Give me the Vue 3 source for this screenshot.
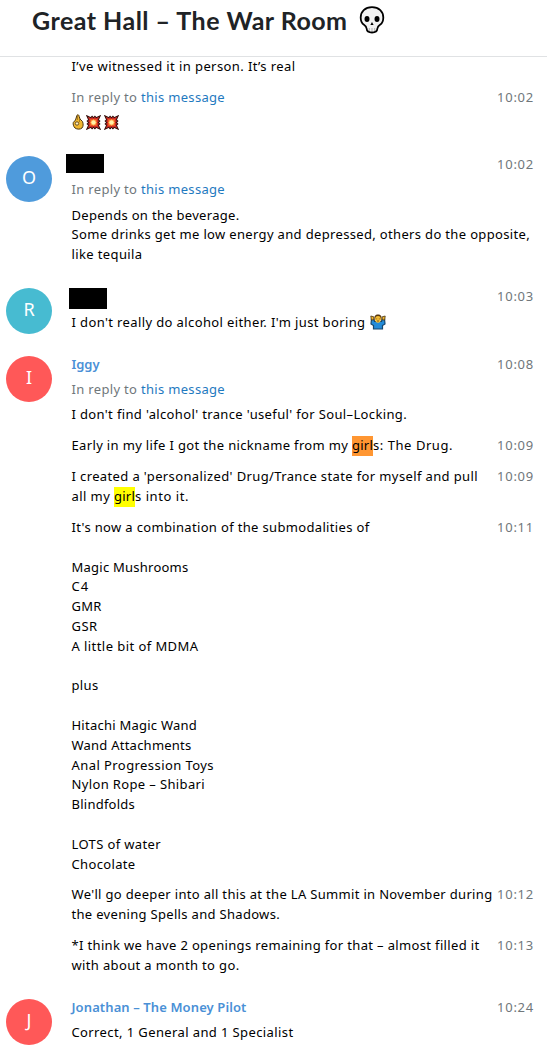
<template>
  <div class="page">
    <header class="header">
      <h1 v-fit="315.500">Great Hall – The War Room</h1>
      <svg class="skull" viewBox="0 0 26 28">
        <path d="M13 1.200C6 1.200 1.700 5.500 1.700 11.500c0 3.800 1 6 3.300 7.300 1.600 1 2.400 1.800 2.600 3.700.2 2.800 1.600 4 5.400 4s5.200-1.200 5.400-4c.2-1.900 1-2.700 2.600-3.700 2.300-1.300 3.300-3.500 3.300-7.300C24.300 5.500 20 1.200 13 1.200z" fill="#f2f2f2" stroke="#000" stroke-width="1.800" />
        <ellipse cx="8" cy="13" rx="2.500" ry="3" />
        <ellipse cx="18" cy="13" rx="2.500" ry="3" />
        <path d="M13 16l-1.600 3h3.200z" />
        <path d="M10.300 22v3M13 22v3M15.700 22v3" stroke="#aaa" stroke-width="0.900" />
      </svg>
    </header>

    <main class="history">
      <section v-for="(group, g) in groups" :key="g" class="group">
        <div class="side">
          <div v-if="group.initial" class="avatar" :class="group.color">{{ group.initial }}</div>
        </div>
        <div class="messages">
          <div v-for="(msg, m) in group.messages" :key="m" class="message">
            <span v-if="msg.time" v-fit="37" class="time">{{ msg.time }}</span>
            <div v-if="msg.redacted" class="name">
              <span class="redacted" :class="msg.redacted"></span>
            </div>
            <div v-if="msg.name" class="name"><span v-fit="msg.nameWidth">{{ msg.name }}</span></div>
            <div v-if="msg.reply" class="reply">
              <span v-fit="69.500">In reply to </span><a v-fit="84">this message</a>
            </div>
            <div v-for="(line, l) in msg.lines" :key="l" class="line">
              <template v-for="(part, p) in line" :key="p">
                <svg v-if="part.icon === 'ok'" class="ok" viewBox="0 0 12 16">
                  <path d="M5 1.200C6 .3 7 1 7.200 2.500L8 5l2.500 2.500c1 2.500.8 5-.5 6.500-1.500 1.500-5 1.500-7 0C1.500 12.500.8 10 1.300 8.500L3.500 6z" fill="#efb62f" stroke="#4b3511" stroke-width="1" />
                  <circle cx="5" cy="9.500" r="1.700" fill="#fff0bd" stroke="#5c4218" stroke-width="0.900" />
                  <path d="M5.500 2v4M7.500 5v3" stroke="#8c671c" stroke-width="0.700" fill="none" />
                </svg>
                <svg v-else-if="part.icon === 'boom'" class="boom" viewBox="0 0 16 16">
                  <path d="M.8.800l4.400 2L6.500 1.300 8 3l1.500-1.700 1.300 1.500 4.400-2-2 4.400 1.500 1.300L13 8l1.700 1.500-1.500 1.300 2 4.400-4.400-2-1.300 1.500L8 13l-1.500 1.700-1.300-1.500-4.400 2 2-4.400-1.500-1.300L3 8 1.300 6.500l1.500-1.300z" fill="#d52b22" stroke="#35100d" stroke-width="1.100" />
                  <path d="M4.500 4.500l2.200.5L8 4l1.300 1 2.200-.5-.5 2.200L12 8l-1 1.300.5 2.200-2.200-.5L8 12l-1.300-1-2.200.5.500-2.200L4 8l1-1.300z" fill="#ff8b30" />
                  <circle cx="8" cy="8" r="2.400" fill="#fff2a8" />
                </svg>
                <svg v-else-if="part.icon === 'shrug'" class="shrug" viewBox="0 0 16 16">
                  <path d="M1.500 5L1 10l2.500 1.500V15h9v-3.500L15 10l-.5-5-2.500.5-.5 2h-7l-.5-2z" fill="#238bd8" stroke="#16466d" stroke-width="1.200" />
                  <path d="M.8 2l3 .8v3l-2.500.2zM15.200 2l-3 .8v3l2.500.2z" fill="#efb52e" stroke="#473313" stroke-width="0.800" />
                  <path d="M4.500 5.500C4 2 5.300.600 8 .600S12 2 11.500 5.500z" fill="#59370f" />
                  <ellipse cx="8" cy="5.300" rx="2.900" ry="3.400" fill="#f5bd32" />
                  <path d="M6.700 4.500v.8M9.300 4.500v.8M7 7h2" stroke="#684015" stroke-width="0.800" />
                </svg>
                <mark v-else-if="part.mark" v-fit="part.w" :class="part.mark">{{ part.text }}</mark>
                <span v-else v-fit="part.w">{{ part.text }}</span>
              </template>
            </div>
          </div>
        </div>
      </section>
    </main>
  </div>
</template>

<script setup>
// Spreads the letters so that a run of text takes the given width
const vFit = {
  mounted(el, { value }) {
    if (!value) return
    const natural = el.getBoundingClientRect().width
    el.style.letterSpacing = (value - natural) / el.textContent.length + 'px'
  }
}

const t = (text, w) => [{ text, w }]

const groups = [
  {
    messages: [
      { lines: [t('I’ve witnessed it in person. It’s real', 224)] },
      { time: '10:02', reply: true, lines: [[{ icon: 'ok' }, { icon: 'boom' }, { icon: 'boom' }]] }
    ]
  },
  {
    initial: 'O',
    color: 'blue',
    messages: [
      {
        time: '10:02',
        redacted: 'first',
        reply: true,
        lines: [
          t('Depends on the beverage.', 168),
          t('Some drinks get me low energy and depressed, others do the opposite,', 458.5),
          t('like tequila', 71)
        ]
      }
    ]
  },
  {
    initial: 'R',
    color: 'teal',
    messages: [
      {
        time: '10:03',
        redacted: 'second',
        lines: [[{ text: 'I don\'t really do alcohol either. I\'m just boring', w: 294 }, { icon: 'shrug' }]]
      }
    ]
  },
  {
    initial: 'I',
    color: 'red',
    messages: [
      {
        time: '10:08',
        name: 'Iggy',
        nameWidth: 28,
        reply: true,
        lines: [t('I don\'t find \'alcohol\' trance \'useful\' for Soul–Locking.', 335.5)]
      },
      {
        time: '10:09',
        lines: [[
          { text: 'Early in my life I got the nickname from my ', w: 280.5 },
          { text: 'girl', w: 21, mark: 'current' },
          { text: 's: The Drug.', w: 80 }
        ]]
      },
      {
        time: '10:09',
        lines: [
          t('I created a \'personalized\' Drug/Trance state for myself and pull', 406.5),
          [
            { text: 'all my ', w: 42.5 },
            { text: 'girl', w: 21, mark: 'found' },
            { text: 's into it.', w: 54 }
          ]
        ]
      },
      {
        time: '10:11',
        lines: [
          t('It\'s now a combination of the submodalities of', 298),
          [],
          t('Magic Mushrooms', 117),
          t('C4', 17.5),
          t('GMR', 30),
          t('GSR', 26),
          t('A little bit of MDMA', 127),
          [],
          t('plus', 27),
          [],
          t('Hitachi Magic Wand', 125.5),
          t('Wand Attachments', 120),
          t('Anal Progression Toys', 142.5),
          t('Nylon Rope – Shibari', 133.5),
          t('Blindfolds', 63.5),
          [],
          t('LOTS of water', 89.5),
          t('Chocolate', 64)
        ]
      },
      {
        time: '10:12',
        lines: [
          t('We\'ll go deeper into all this at the LA Summit in November during', 421),
          t('the evening Spells and Shadows.', 208.5)
        ]
      },
      {
        time: '10:13',
        lines: [
          t('*I think we have 2 openings remaining for that – almost filled it', 408),
          t('with about a month to go.', 168)
        ]
      }
    ]
  },
  {
    initial: 'J',
    color: 'red',
    messages: [
      {
        time: '10:24',
        name: 'Jonathan – The Money Pilot',
        nameWidth: 175,
        lines: [t('Correct, 1 General and 1 Specialist', 222)]
      }
    ]
  }
]
</script>

<style>
body { margin: 0; background: #fff; }
</style>

<style scoped>
.page { height: 1058px; overflow: hidden; font-family: "Noto Sans", "Open Sans", sans-serif; font-size: 13px; color: #000; }
.header { display: flex; box-sizing: border-box; height: 57px; padding: 4px 0 0 32px; border-bottom: 1px solid #e0e2e4; }
h1 { align-self: flex-start; margin: 0; font-family: Lato, "Noto Sans", sans-serif; font-size: 25px; line-height: 33px; font-weight: 700; color: #202326; white-space: pre; }
.skull { width: 26px; height: 28px; margin: 2px 0 0 11px; }

.history { margin-top: -0.400px; }
.group { display: flex; margin-bottom: 11.100px; }
.side { flex: none; width: 71.500px; }
.avatar { width: 46px; height: 46px; margin: 6.600px 0 0 6px; border-radius: 50%; line-height: 43px; text-align: center; font-size: 18px; color: #fff; }
.blue { background: #4f9bdc; }
.teal { background: #47bbd1; }
.red { background: #ff5858; }

.messages { flex: 1; }
.message { position: relative; padding: 5.600px 0; }
.group:first-child .message:first-child { padding-top: 0; }
.line, .name, .reply { height: 19.800px; line-height: 19.800px; white-space: pre; }
.name, .reply { margin-bottom: 5.500px; }
.name { font-weight: 600; color: #4a90d6; }
.reply { color: #70777b; }
.reply a { color: #1f7abf; }
.time { position: absolute; top: 5.600px; right: 13px; line-height: 19.800px; color: #70777b; white-space: pre; }
.redacted { display: block; background: #000; position: relative; }
.first { width: 38px; height: 19px; left: -5.500px; top: -0.500px; }
.second { width: 38px; height: 21px; left: -2.500px; top: 0.700px; }

mark { display: inline-block; height: 20px; line-height: 19px; vertical-align: top; color: #000; }
.current { background: #ff9632; }
.found { background: #ff0; }
.ok { width: 12px; height: 16px; margin-right: 2px; vertical-align: -3px; }
.boom { width: 15px; height: 15px; margin-right: 3px; vertical-align: -3px; }
.shrug { width: 16px; height: 16px; margin-left: 4px; vertical-align: -3px; }
</style>
